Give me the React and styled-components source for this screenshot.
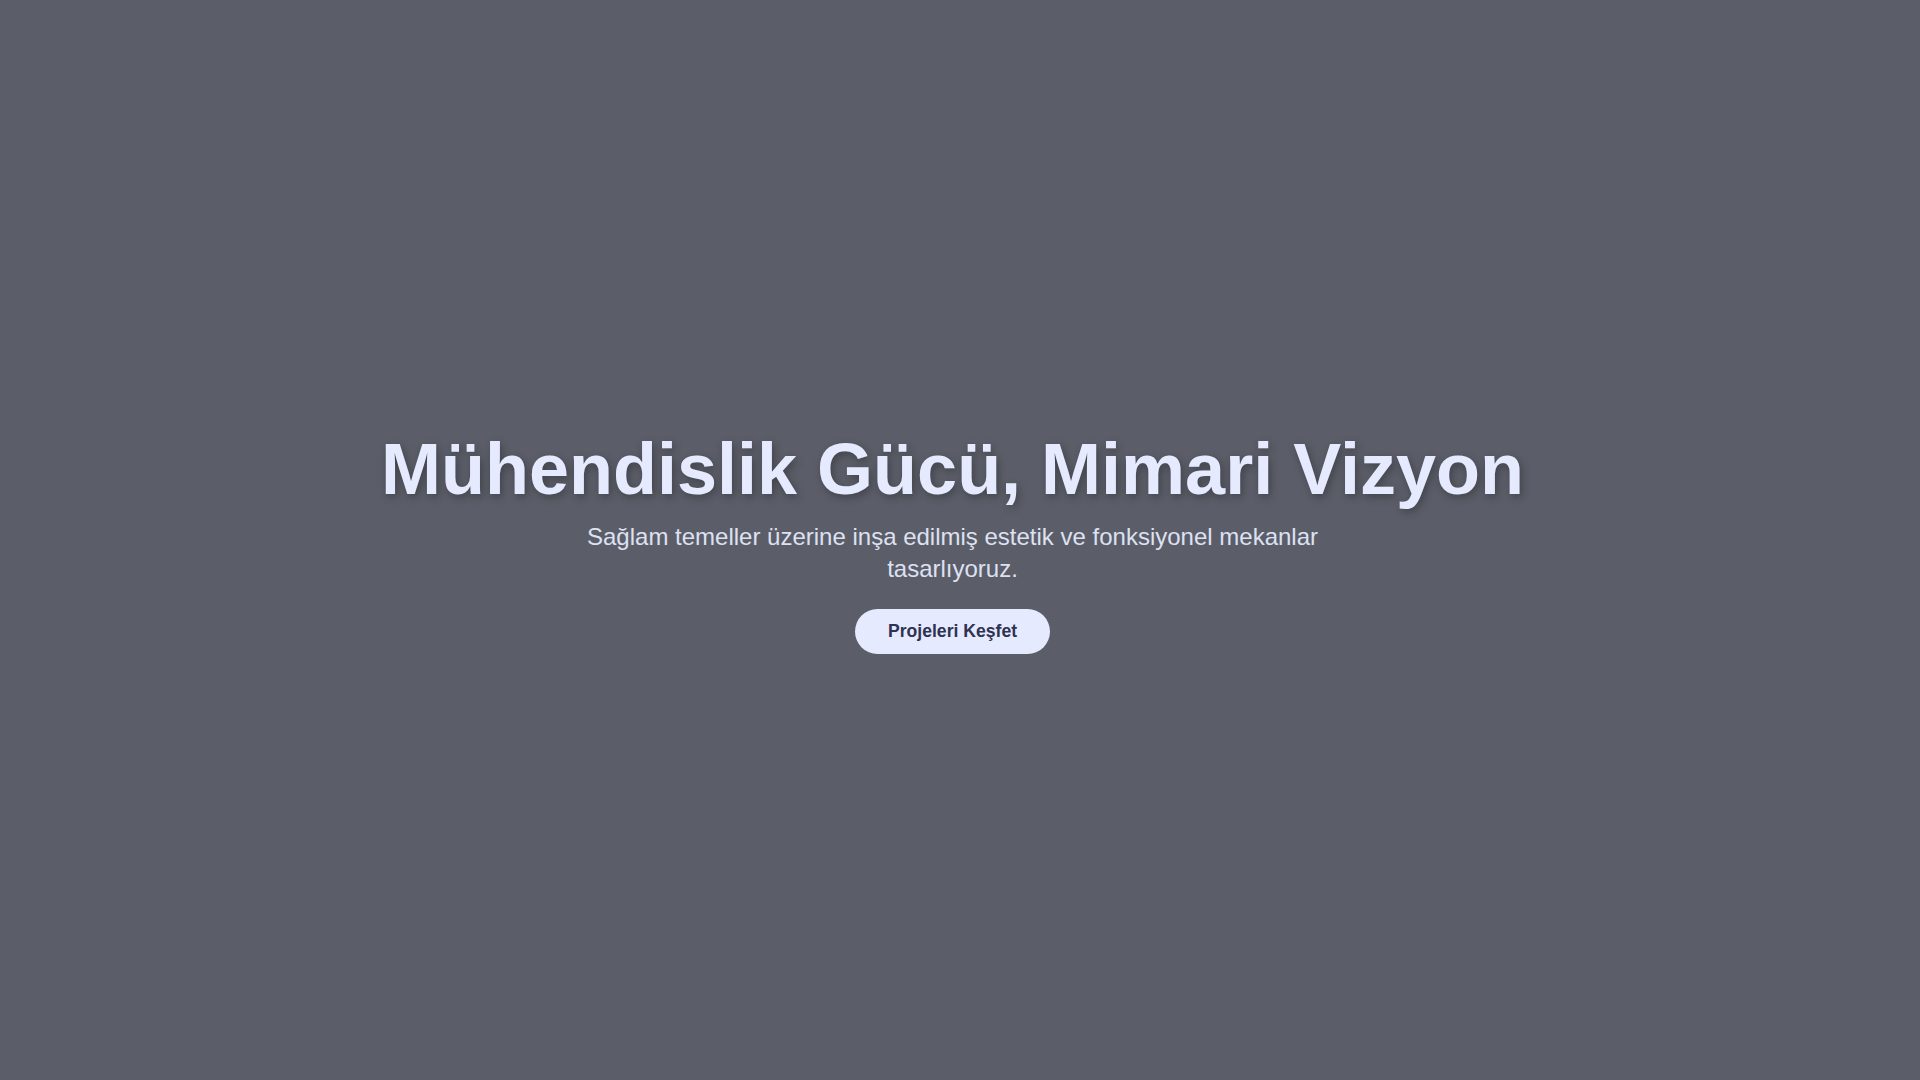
import React from 'react'
import styled, { createGlobalStyle } from 'styled-components'

const GlobalStyle = createGlobalStyle`
  * {
    box-sizing: border-box;
  }
  html, body {
    margin: 0;
    padding: 0;
    background: #5b5e68;
  }
  body {
    font-family: "Liberation Sans", Arial, sans-serif;
    color: #e6eaff;
  }
`

const Hero = styled.section`
  height: 100vh;
  display: flex;
  flex-direction: column;
  align-items: center;
  justify-content: center;
  text-align: center;
  padding: 0 calc(2rem + 15px) 0 2rem;
  background: #5b5e68;
`

const Title = styled.h1`
  font-size: 72px;
  font-weight: bold;
  line-height: 1.2;
  margin: 0 0 8px 0;
  color: #e6eaff;
  text-shadow: 2px 3px 8px rgba(0, 0, 0, 0.3);
`

const Subtitle = styled.p`
  font-size: 24px;
  line-height: 1.35;
  max-width: 800px;
  margin: 0 0 24px 0;
  color: #dde1f2;
`

const Button = styled.a`
  display: inline-block;
  padding: 12px 33px;
  font-size: 17.6px;
  font-weight: bold;
  line-height: 1.15;
  color: #2e3352;
  background: #e6eaff;
  border-radius: 999px;
  text-decoration: none;
  cursor: pointer;
`

const Below = styled.section`
  height: 112px;
  background: #5b5e68;
`

const App = () => {
  return (
    <>
      <GlobalStyle />
      <Hero>
        <Title>Mühendislik Gücü, Mimari Vizyon</Title>
        <Subtitle>
          Sağlam temeller üzerine inşa edilmiş estetik ve fonksiyonel mekanlar tasarlıyoruz.
        </Subtitle>
        <Button href="#projeler">Projeleri Keşfet</Button>
      </Hero>
      <Below id="projeler" />
    </>
  )
}

export default App
